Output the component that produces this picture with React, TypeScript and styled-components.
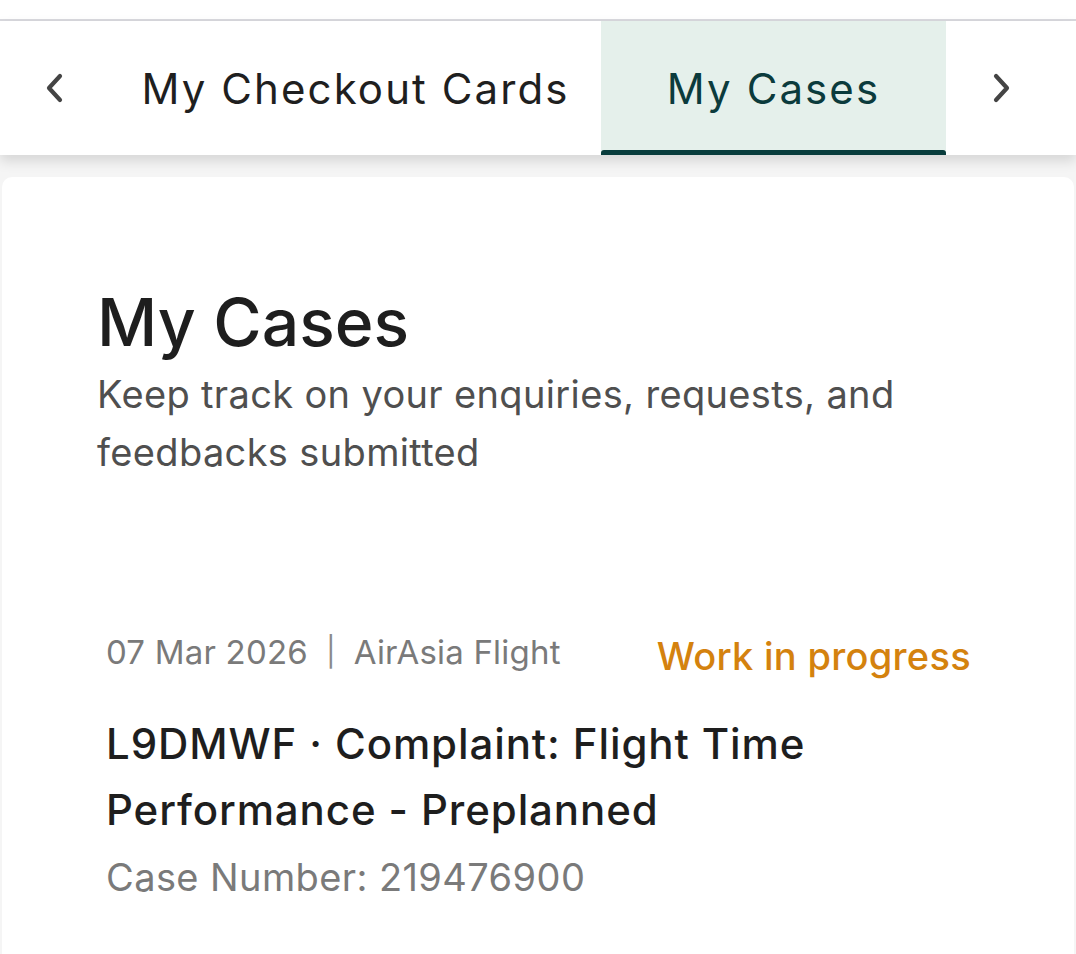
import React from "react";
import styled, { createGlobalStyle } from "styled-components";

const Global = createGlobalStyle`
  html, body { margin: 0; padding: 0; background: #f5f5f5; }
  body { font-family: Inter, "Noto Sans", sans-serif; }
  * { box-sizing: border-box; }
`;

const Page = styled.div`
  width: 1076px;
  height: 954px;
  overflow: hidden;
  display: flex;
  flex-direction: column;
  background: #f5f5f5;
`;

const TopStrip = styled.div`
  height: 21px;
  background: #ffffff;
  border-bottom: 2px solid #d9d9de;
`;

const TabBar = styled.nav`
  height: 134px;
  display: flex;
  align-items: stretch;
  background: #ffffff;
  box-shadow: 0 6px 12px rgba(0, 0, 0, 0.13);
  position: relative;
  z-index: 1;
`;

const ArrowButton = styled.button`
  width: 110px;
  border: none;
  background: transparent;
  display: flex;
  align-items: center;
  justify-content: center;
  padding: 0;
  color: #444444;
`;

const Tab = styled.div<{ $active?: boolean; $width: number }>`
  width: ${(p) => p.$width}px;
  display: flex;
  align-items: center;
  justify-content: center;
  position: relative;
  font-size: 42px;
  letter-spacing: 2.1px;
  color: ${(p) => (p.$active ? "#0b3b3c" : "#1f1f1f")};
  background: ${(p) => (p.$active ? "#e5f0eb" : "transparent")};
  &::after {
    content: "";
    display: ${(p) => (p.$active ? "block" : "none")};
    position: absolute;
    left: 0;
    right: 0;
    bottom: 0;
    height: 5px;
    border-radius: 3px 3px 0 0;
    background: #083c3c;
  }
`;

const Card = styled.main`
  flex: 1;
  margin: 22px 2px 0 2px;
  background: #ffffff;
  border-radius: 10px 10px 0 0;
  padding: 105px 0 0 95px;
`;

const Title = styled.h1`
  margin: 0;
  font-size: 66px;
  font-weight: 500;
  line-height: 80px;
  color: #1e1e1e;
`;

const Subtitle = styled.p`
  margin: 3px 0 0 0;
  width: 840px;
  font-size: 38px;
  letter-spacing: 0.35px;
  line-height: 58px;
  color: #4f4f4f;
`;

const CaseItem = styled.section`
  margin-top: 144px;
  padding-left: 9px;
  width: 874px;
`;

const MetaRow = styled.div`
  display: flex;
  justify-content: space-between;
  align-items: center;
`;

const Meta = styled.span`
  font-size: 33px;
  letter-spacing: 0.2px;
  color: #7a7a7a;
`;

const Separator = styled.span`
  display: inline-block;
  margin: 0 18px;
  font-size: 29px;
  color: #8a8a8a;
  vertical-align: 2px;
`;

const Status = styled.span`
  padding-top: 8px;
  font-size: 38px;
  font-weight: 500;
  letter-spacing: 0.3px;
  color: #d4820e;
`;

const CaseTitle = styled.h2`
  margin: 32px 0 0 0;
  font-size: 42px;
  font-weight: 500;
  letter-spacing: 0.9px;
  line-height: 66px;
  color: #1e1e1e;
`;

const CaseNumber = styled.div`
  margin-top: 11px;
  font-size: 38px;
  letter-spacing: 0.4px;
  color: #7a7a7a;
`;

const Chevron = ({ dir }: { dir: "left" | "right" }) => (
  <svg width="24" height="32" viewBox="0 0 24 32" fill="none">
    <path
      d={dir === "left" ? "M17 4 L6 16 L17 28" : "M7 4 L18 16 L7 28"}
      stroke="currentColor"
      strokeWidth="4.2"
      strokeLinecap="round"
      strokeLinejoin="round"
    />
  </svg>
);

export default function App() {
  return (
    <>
      <Global />
      <Page>
        <TopStrip />
        <TabBar>
          <ArrowButton aria-label="previous">
            <Chevron dir="left" />
          </ArrowButton>
          <Tab $width={491}>My Checkout Cards</Tab>
          <Tab $width={345} $active>
            My Cases
          </Tab>
          <ArrowButton aria-label="next">
            <Chevron dir="right" />
          </ArrowButton>
        </TabBar>
        <Card>
          <Title>My Cases</Title>
          <Subtitle>Keep track on your enquiries, requests, and feedbacks submitted</Subtitle>
          <CaseItem>
            <MetaRow>
              <Meta>
                07 Mar 2026<Separator>|</Separator>AirAsia Flight
              </Meta>
              <Status>Work in progress</Status>
            </MetaRow>
            <CaseTitle>L9DMWF · Complaint: Flight Time Performance - Preplanned</CaseTitle>
            <CaseNumber>Case Number: 219476900</CaseNumber>
          </CaseItem>
        </Card>
      </Page>
    </>
  );
}
